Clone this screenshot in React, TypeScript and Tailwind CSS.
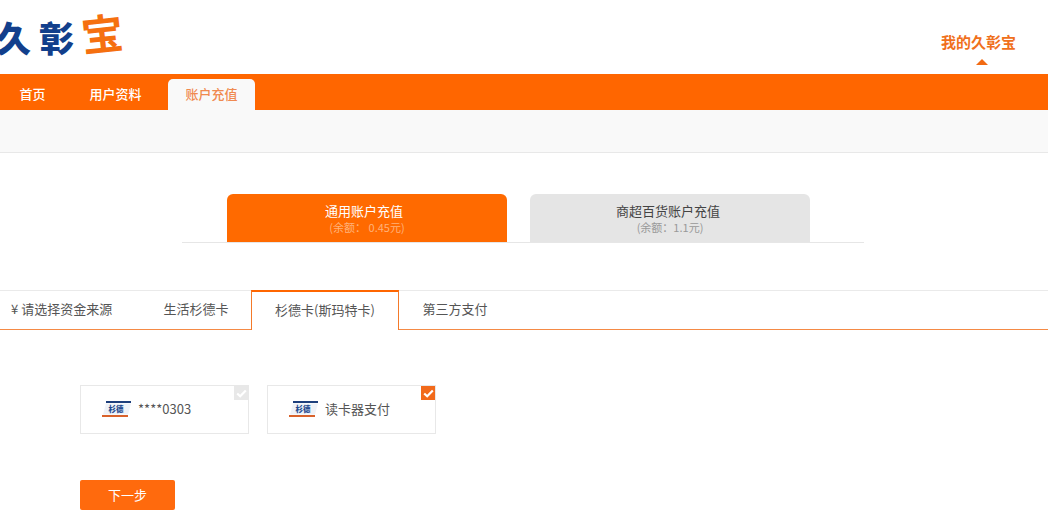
const cjk = { fontFamily: '"Noto Sans CJK SC", "Liberation Sans", sans-serif' };

function CardLogo() {
  return (
    <svg width="30" height="17" viewBox="0 0 30 17" className="shrink-0">
      <rect x="4" y="0" width="25" height="2" fill="#1d3f7c" />
      <path d="M4 2.5 H29 L26 13.5 H1 Z" fill="#eef2f8" />
      <text x="6.5" y="11" fontSize="7.5" fontWeight="900" fill="#1f4b8f" style={cjk}>杉德</text>
      <rect x="0" y="14" width="26" height="2" fill="#d9622b" />
    </svg>
  );
}

function PayCard({ label, checked }: { label: string; checked?: boolean }) {
  return (
    <div className="relative flex h-[49px] w-[169px] items-center border border-[#e8e8e8] pl-[21px]">
      <CardLogo />
      <span className="mb-[1px] ml-[6px] text-[13px] text-[#555]">{label}</span>
      <span
        className={`absolute right-0 top-0 flex h-[14px] w-[14px] items-center justify-center ${checked ? "bg-[#f26a1b]" : "bg-[#e8e8e8]"}`}
      >
        <svg width="11" height="9" viewBox="0 0 11 9" fill="none">
          <path d="M1.2 4.5 L4.2 7.3 L9.8 1.5" stroke="#fff" strokeWidth="2.2" />
        </svg>
      </span>
    </div>
  );
}

export default function App() {
  return (
    <div className="h-[522px] w-[1048px] overflow-hidden bg-white" style={cjk}>
      <header className="flex h-[74px] items-start justify-between">
        <div className="-ml-[4px] flex items-baseline pt-[6px]">
          <span className="text-[35px] font-black leading-[56px] tracking-[8px] text-[#123f8c]">久彰</span>
          <span className="-ml-[1px] -translate-y-[2px] -rotate-6 text-[42px] font-bold leading-[56px] text-[#f5700f]" style={{ fontFamily: '"Noto Sans CJK JP", serif' }}>宝</span>
        </div>
        <div className="mr-[32px] flex flex-col items-center pt-[32px]">
          <span className="text-[15px] font-bold leading-[20px] text-[#f0701c]">我的久彰宝</span>
          <span className="ml-[8px] mt-[7px] h-0 w-0 border-x-[6px] border-b-[6px] border-x-transparent border-b-[#f26a12]" />
        </div>
      </header>

      <nav className="flex h-[36px] items-end bg-[#ff6600] text-[13px] font-medium">
        <a className="flex h-[31px] w-[65px] items-center justify-center pb-[1px] text-white">首页</a>
        <a className="flex h-[31px] w-[101px] items-center justify-center pb-[1px] text-white">用户资料</a>
        <a className="ml-[2px] flex h-[31px] w-[87px] items-center justify-center rounded-t-[5px] bg-[#f9f9f9] pb-[1px] text-[#f08a50]">账户充值</a>
      </nav>
      <div className="h-[43px] border-b border-[#e8e8e8] bg-[#f9f9f9]" />

      <section className="flex pl-[182px] pt-[41px]">
        <div className="flex h-[49px] w-[682px] gap-[23px] border-b border-[#e6e6e6] pl-[45px]">
          <div className="flex h-[48px] w-[280px] flex-col items-center rounded-t-[6px] bg-[#ff6a00] pt-[8px]">
            <span className="pr-[6px] text-[13px] leading-[18px] text-white">通用账户充值</span>
            <span className="text-[11px] leading-[15px] text-[#ffb27a]">(余额： 0.45元)</span>
          </div>
          <div className="flex h-[48px] w-[280px] flex-col items-center rounded-t-[6px] bg-[#e5e5e5] pt-[8px]">
            <span className="pr-[4px] text-[13px] leading-[18px] text-[#444]">商超百货账户充值</span>
            <span className="text-[11px] leading-[15px] text-[#999]">(余额：1.1元)</span>
          </div>
        </div>
      </section>

      <div className="mt-[47px] flex h-[40px] items-stretch border-y border-t-[#eaeaea] border-b-[#f58a45] text-[13px] text-[#555]">
        <div className="flex w-[139px] items-center pb-[2px] pl-[11px]">¥ 请选择资金来源</div>
        <div className="flex w-[112px] items-center justify-center pb-[2px] pl-[2px]">生活杉德卡</div>
        <div className="-my-[1px] flex w-[148px] items-center justify-center border-x border-t-2 border-x-[#f47a2a] border-t-[#ff6600] bg-white pb-[3px]">杉德卡(斯玛特卡)</div>
        <div className="flex w-[112px] items-center justify-center pb-[2px]">第三方支付</div>
      </div>

      <div className="ml-[80px] mt-[55px] flex gap-[18px]">
        <PayCard label="****0303" />
        <PayCard label="读卡器支付" checked />
      </div>

      <button className="ml-[80px] mt-[46px] flex h-[30px] w-[95px] items-center justify-center rounded-[2px] bg-[#ff6a0d] text-[13px] text-white">
        下一步
      </button>
    </div>
  );
}
